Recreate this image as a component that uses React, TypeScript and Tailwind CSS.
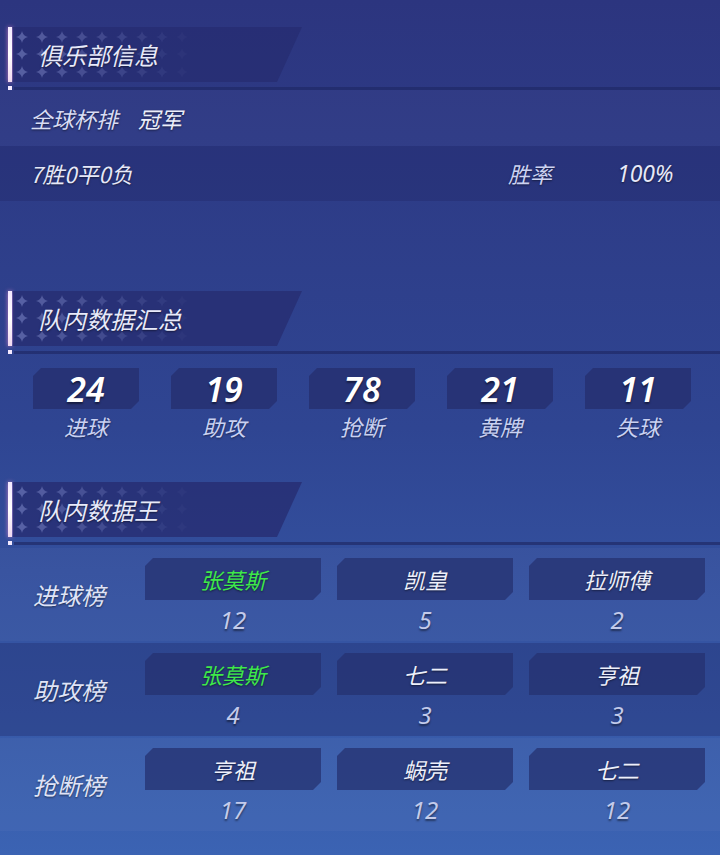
import React from 'react';

const cut8 =
  '[clip-path:polygon(8px_0,100%_0,100%_calc(100%_-_8px),calc(100%_-_8px)_100%,0_100%,0_8px)]';

function Stars() {
  const cols = 9;
  const rows = [10, 27, 45];
  const items: { x: number; y: number; o: number }[] = [];
  rows.forEach((y) => {
    for (let c = 0; c < cols; c++) {
      items.push({ x: 9 + c * 20, y, o: 0.36 * (1 - c / cols) });
    }
  });
  return (
    <svg className="absolute left-0 top-0 pointer-events-none" width="200" height="55">
      {items.map((s, i) => (
        <path
          key={i}
          d={`M${s.x} ${s.y - 6} Q${s.x + 1} ${s.y - 1} ${s.x + 6} ${s.y} Q${s.x + 1} ${s.y + 1} ${s.x} ${s.y + 6} Q${s.x - 1} ${s.y + 1} ${s.x - 6} ${s.y} Q${s.x - 1} ${s.y - 1} ${s.x} ${s.y - 6}Z`}
          fill="#aab4f0"
          opacity={s.o}
        />
      ))}
    </svg>
  );
}

function SectionHeader({ title }: { title: string }) {
  return (
    <div className="h-[63px] flex flex-col">
      <div className="flex h-[55px]">
        <div className="ml-[8px] w-[4px] h-full bg-linear-to-b from-[#f4e8ff] via-[#ffffff] to-[#f0d8f0] shadow-[0_0_4px_rgba(255,150,220,0.7)]" />
        <div className="relative ml-[1px] w-[289px] h-full bg-[#272d72]/80 [clip-path:polygon(0_0,100%_0,calc(100%_-_25px)_100%,0_100%)]">
          <Stars />
          <div className="relative pl-[25px] h-full flex items-center text-[24px] italic text-[#e8eafa] [text-shadow:0_1px_2px_rgba(0,0,0,0.5)]">
            {title}
          </div>
        </div>
      </div>
      <div className="flex items-end h-[8px]">
        <div className="ml-[8px] w-[4px] h-[4px] bg-[#f4eaff]" />
        <div className="ml-[2px] flex-1 h-[3px] bg-[#1f2a66]/70" />
      </div>
    </div>
  );
}

const stats = [
  { v: '24', l: '进球' },
  { v: '19', l: '助攻' },
  { v: '78', l: '抢断' },
  { v: '21', l: '黄牌' },
  { v: '11', l: '失球' },
];

const boards = [
  {
    label: '进球榜',
    items: [
      { n: '张莫斯', v: '12', g: true },
      { n: '凯皇', v: '5' },
      { n: '拉师傅', v: '2' },
    ],
  },
  {
    label: '助攻榜',
    items: [
      { n: '张莫斯', v: '4', g: true },
      { n: '七二', v: '3' },
      { n: '亨祖', v: '3' },
    ],
  },
  {
    label: '抢断榜',
    items: [
      { n: '亨祖', v: '17' },
      { n: '蜗壳', v: '12' },
      { n: '七二', v: '12' },
    ],
  },
];

export default function App() {
  return (
    <div className="w-[720px] h-[855px] overflow-hidden bg-linear-to-b from-[#2c357f] via-[#2f4592] to-[#3b63b3] font-['Noto_Sans_CJK_SC','Noto_Sans',sans-serif] text-[#e6e8f8]">
      <div className="pt-[27px]">
        <SectionHeader title="俱乐部信息" />
        <div className="h-[56px] flex items-center pl-[30px] gap-[20px] text-[22px] italic bg-white/[0.02] [text-shadow:0_1px_2px_rgba(0,0,0,0.5)]">
          <span className="text-[#d8dcf4]">全球杯排</span>
          <span className="text-[#eceefa]">冠军</span>
        </div>
        <div className="h-[55px] flex items-center pl-[30px] text-[22px] italic bg-[#232c70]/50 [text-shadow:0_1px_2px_rgba(0,0,0,0.5)]">
          <span className="w-[478px]">7胜0平0负</span>
          <span className="w-[109px] text-[#cdd3f2]">胜率</span>
          <span className="font-['Noto_Sans',sans-serif] text-[23px]">100%</span>
        </div>
      </div>

      <div className="mt-[90px]">
        <SectionHeader title="队内数据汇总" />
        <div className="flex gap-[32px] pl-[33px] pt-[14px]">
          {stats.map((s) => (
            <div key={s.l} className="w-[106px] flex flex-col items-center">
              <div className={`w-full h-[41px] bg-[#25306f]/80 ${cut8} flex items-center justify-center`}>
                <span className="font-['Noto_Sans',sans-serif] font-semibold italic text-[34px] leading-none text-white [text-shadow:0_2px_2px_rgba(0,0,0,0.45)]">
                  {s.v}
                </span>
              </div>
              <span className="mt-[2px] text-[22px] leading-[30px] italic text-[#c9d1f2] [text-shadow:0_1px_2px_rgba(0,0,0,0.45)]">
                {s.l}
              </span>
            </div>
          ))}
        </div>
      </div>

      <div className="mt-[41px]">
        <SectionHeader title="队内数据王" />
        <div className="mt-[3px] flex flex-col gap-[2px]">
          {boards.map((b, bi) => (
            <div
              key={b.label}
              className={`h-[93px] flex items-center ${bi === 1 ? 'bg-[#243070]/40' : 'bg-white/[0.03]'}`}
            >
              <div className="w-[145px] pl-[33px] text-[24px] italic text-[#dfe3f7] [text-shadow:0_1px_2px_rgba(0,0,0,0.5)]">
                {b.label}
              </div>
              <div className="flex gap-[16px] self-start pt-[10px]">
                {b.items.map((it, i) => (
                  <div key={i} className="w-[176px] flex flex-col items-center">
                    <div className={`w-full h-[42px] bg-[#253170]/75 ${cut8} flex items-center justify-center`}>
                      <span
                        className={`text-[22px] italic [text-shadow:0_1px_2px_rgba(0,0,0,0.5)] ${
                          it.g ? 'text-[#3ee84a]' : 'text-[#eef0fb]'
                        }`}
                      >
                        {it.n}
                      </span>
                    </div>
                    <span className="mt-[4px] font-['Noto_Sans',sans-serif] italic text-[24px] leading-[32px] text-[#c3cbeb] [text-shadow:0_2px_2px_rgba(0,0,0,0.45)]">
                      {it.v}
                    </span>
                  </div>
                ))}
              </div>
            </div>
          ))}
        </div>
      </div>
    </div>
  );
}
